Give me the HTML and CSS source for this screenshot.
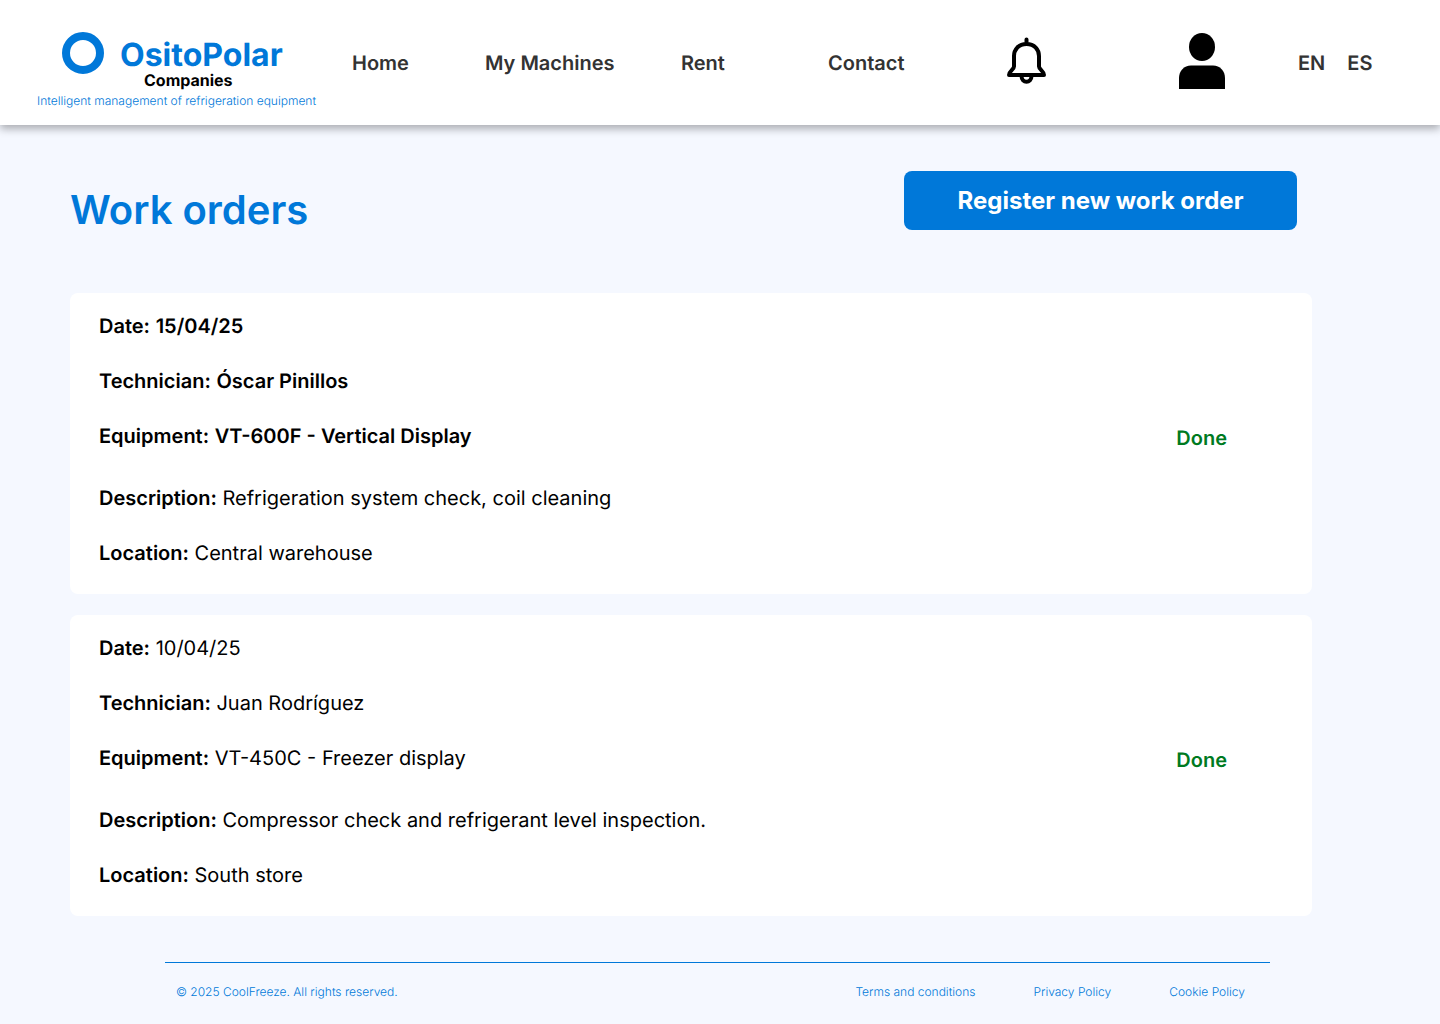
FILE: index.html
```html
<!DOCTYPE html>
<html lang="en">
<head>
<meta charset="utf-8">
<meta name="viewport" content="width=device-width, initial-scale=1">
<title>Work orders - OsitoPolar</title>
<link rel="stylesheet" href="styles.css">
</head>
<body>
<header class="site-header">
  <a class="brand" href="#">
    <span class="brand-row">
      <svg class="brand-ring" viewBox="0 0 42 42" aria-hidden="true"><circle cx="21" cy="21" r="17" fill="none" stroke="currentColor" stroke-width="8"/></svg>
      <span class="brand-words">
        <span class="brand-name">OsitoPolar</span>
        <span class="brand-type">Companies</span>
      </span>
    </span>
    <span class="brand-tagline">Intelligent management of refrigeration equipment</span>
  </a>
  <nav class="main-nav" aria-label="Main">
    <a href="#">Home</a>
    <a href="#">My Machines</a>
    <a href="#">Rent</a>
    <a href="#">Contact</a>
    <button class="icon-button" type="button" aria-label="Notifications">
      <svg class="bell" viewBox="0 0 39 48" fill="none" stroke="currentColor" stroke-width="4" stroke-linecap="round" stroke-linejoin="round" aria-hidden="true"><path d="M19.500 2.500V7M19.500 7C11.500 7 7 12.500 7 19V29.500C7 32.500 2 34 2 38H37C37 34 32 32.500 32 29.500V19C32 12.500 27.500 7 19.500 7Z"/><path d="M14.500 39C14.500 46.500 24.500 46.500 24.500 39"/></svg>
    </button>
    <button class="icon-button" type="button" aria-label="Account">
      <svg class="person" viewBox="0 0 46 56" fill="currentColor" aria-hidden="true"><ellipse cx="23" cy="14" rx="13" ry="14"/><path d="M0 56V45C0 38 5 32.500 12 32.500H34C41 32.500 46 38 46 45V56Z"/></svg>
    </button>
    <span class="languages"><a href="#" lang="en">EN</a><a href="#" lang="es">ES</a></span>
  </nav>
</header>
<main class="content">
  <div class="page-head">
    <h1>Work orders</h1>
    <button class="primary" type="button">Register new work order</button>
  </div>
  <article class="order current">
    <dl class="details">
      <div><dt>Date:</dt> <dd>15/04/25</dd></div>
      <div><dt>Technician:</dt> <dd>Óscar Pinillos</dd></div>
      <div><dt>Equipment:</dt> <dd>VT-600F - Vertical Display</dd></div>
      <div class="note"><dt>Description:</dt> <dd>Refrigeration system check, coil cleaning</dd></div>
      <div class="note"><dt>Location:</dt> <dd>Central warehouse</dd></div>
    </dl>
    <p class="status">Done</p>
  </article>
  <article class="order">
    <dl class="details">
      <div><dt>Date:</dt> <dd>10/04/25</dd></div>
      <div><dt>Technician:</dt> <dd>Juan Rodríguez</dd></div>
      <div><dt>Equipment:</dt> <dd>VT-450C - Freezer display</dd></div>
      <div class="note"><dt>Description:</dt> <dd>Compressor check and refrigerant level inspection.</dd></div>
      <div class="note"><dt>Location:</dt> <dd>South store</dd></div>
    </dl>
    <p class="status">Done</p>
  </article>
</main>
<footer class="site-footer">
  <p>© 2025 CoolFreeze. All rights reserved.</p>
  <nav class="legal" aria-label="Legal">
    <a href="#">Terms and conditions</a>
    <a href="#">Privacy Policy</a>
    <a href="#">Cookie Policy</a>
  </nav>
</footer>
</body>
</html>
```
FILE: styles.css
```css
* {
  box-sizing: border-box;
}

body {
  margin: 0;
  min-height: 100vh;
  background: #f5f8ff;
  color: #000;
  font: 400 20px/24px Inter, "Liberation Sans", sans-serif;
  text-rendering: geometricPrecision;
}

h1, p, dl, dd {
  margin: 0;
}

a {
  color: inherit;
  text-decoration: none;
}

button {
  padding: 0;
  border: 0;
  color: inherit;
  font: inherit;
  cursor: pointer;
}

svg {
  display: block;
}

.site-header {
  display: flex;
  align-items: flex-start;
  padding: 30px 24px 15px 37px;
  background: #fff;
  box-shadow: 0 4px 8px rgba(0, 0, 0, 0.3);
}

.brand {
  flex: none;
  width: 315px;
  padding-top: 2px;
  color: #0078d9;
}

.brand-row {
  display: flex;
  gap: 16px;
  padding-left: 25px;
}

.brand-ring {
  width: 42px;
  height: 42px;
}

.brand-words {
  display: flex;
  flex-direction: column;
  align-items: flex-start;
  padding-top: 4px;
}

.brand-name {
  font-size: 32px;
  font-weight: 700;
  line-height: 38px;
}

.brand-type {
  padding-left: 24px;
  color: #000;
  font-size: 16px;
  font-weight: 700;
  line-height: 12px;
}

.brand-tagline {
  display: block;
  padding-top: 6px;
  font-size: 12px;
  font-weight: 300;
  line-height: 18px;
}

.main-nav {
  flex: 1;
  display: grid;
  grid-template-columns: 133fr 196fr 147fr 179fr 172fr 119fr 118fr;
  align-items: center;
  height: 66px;
  color: #333;
  font-weight: 600;
}

.icon-button {
  align-self: start;
  justify-self: start;
  background: none;
  color: #000;
}

.bell {
  width: 39px;
  height: 48px;
  margin-top: 7px;
}

.person {
  width: 46px;
  height: 56px;
  margin-top: 3px;
}

.languages {
  display: flex;
  gap: 22px;
}

.content {
  display: grid;
  gap: 21px;
  padding: 46px 128px 46px 70px;
}

.page-head {
  display: flex;
  justify-content: space-between;
  padding: 0 15px 36px 0;
}

h1 {
  padding-top: 15px;
  padding-bottom: 2px;
  color: #0078d9;
  font-size: 40px;
  font-weight: 600;
  line-height: 48px;
}

.primary {
  width: 393px;
  height: 59px;
  border-radius: 8px;
  background: #0078d9;
  color: #fff;
  font-size: 24px;
  font-weight: 700;
}

.order {
  display: flex;
  justify-content: space-between;
  align-items: center;
  padding: 21px 85px 29px 29px;
  border-radius: 8px;
  background: #fff;
}

.details {
  display: grid;
  gap: 31px;
}

.note {
  padding-top: 7px;
}

.note + .note {
  padding-top: 0;
}

dt, dd {
  display: inline;
}

dt, .current div:not(.note) dd {
  font-weight: 600;
}

.status {
  padding-bottom: 4px;
  color: #007a1f;
  font-weight: 600;
}

.site-footer {
  display: flex;
  justify-content: space-between;
  margin: 0 170px 0 165px;
  padding: 20px 25px 22px 11px;
  border-top: 1px solid #0078d9;
  color: #0078d9;
  font-size: 12px;
  font-weight: 300;
  line-height: 18px;
}

.legal {
  display: flex;
  gap: 58px;
}
```
